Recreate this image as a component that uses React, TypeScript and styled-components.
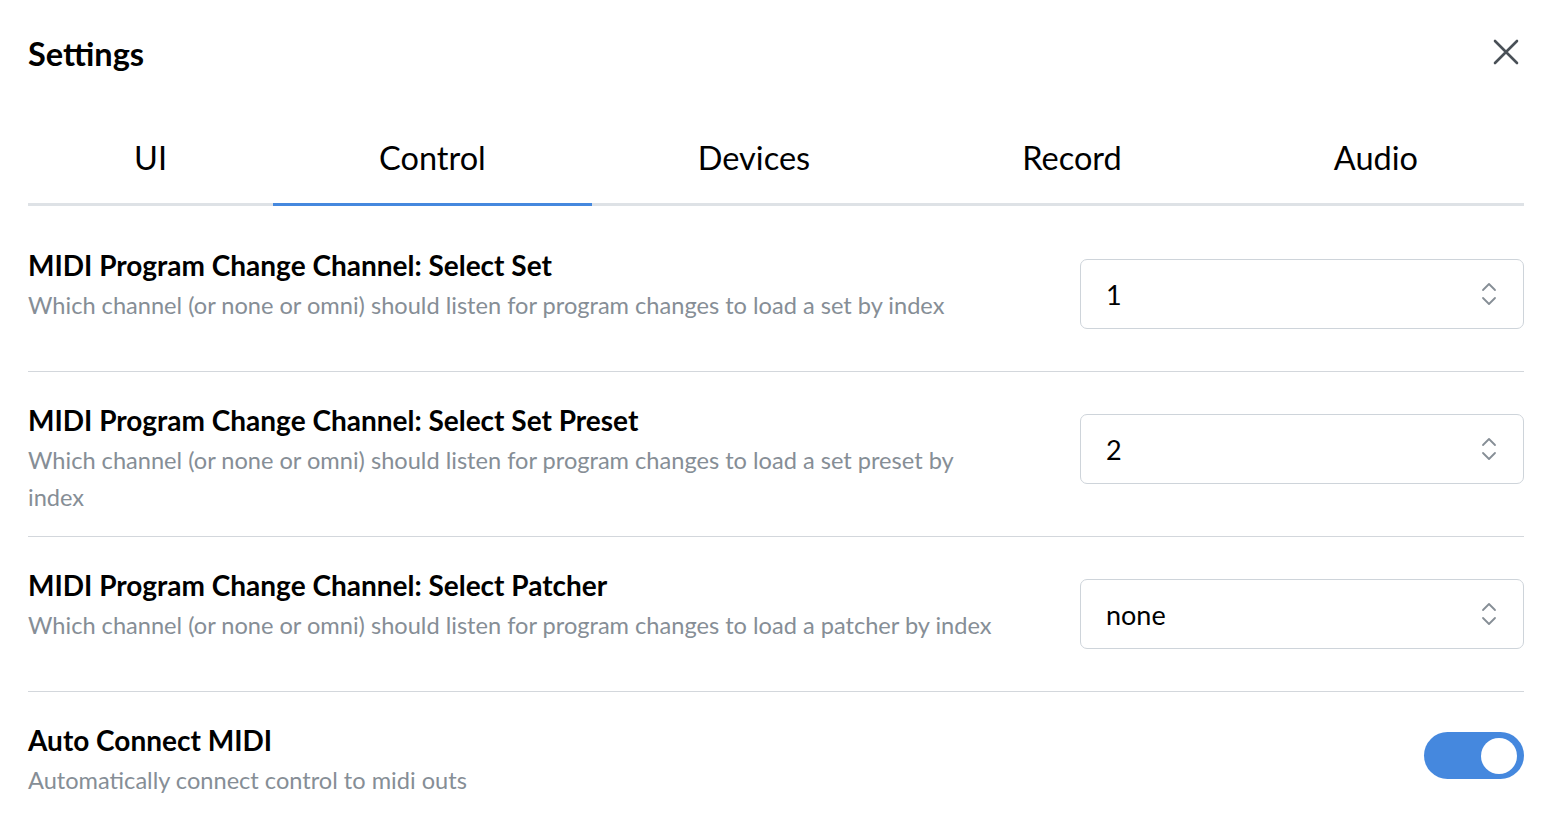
import { useState } from "react";
import styled, { createGlobalStyle } from "styled-components";

const GlobalStyle = createGlobalStyle`
	html, body {
		margin: 0;
		padding: 0;
		background: #ffffff;
	}
	body {
		font-family: Lato, "Noto Sans", sans-serif;
		color: #000000;
	}
`;

const Page = styled.div`
	padding: 0 28px;
	box-sizing: border-box;
	width: 100%;
`;

const Header = styled.div`
	display: flex;
	align-items: center;
	justify-content: space-between;
	height: 108px;
`;

const Title = styled.h1`
	margin: 0;
	font-size: 32.5px;
	font-weight: 700;
	line-height: 1;
`;

const CloseButton = styled.button`
	border: 0;
	background: transparent;
	padding: 0;
	margin-right: 4px;
	margin-top: -4px;
	width: 28px;
	height: 28px;
	display: flex;
	align-items: center;
	justify-content: center;
	color: #495057;
	cursor: pointer;
`;

const TabList = styled.div`
	display: flex;
	border-bottom: 3px solid #dee2e6;
`;

const Tab = styled.button<{ $active?: boolean }>`
	flex: 1 1 auto;
	height: 98px;
	border: 0;
	background: transparent;
	font-family: Lato, "Noto Sans", sans-serif;
	font-size: 32.5px;
	color: #000000;
	padding: 4px 0 0;
	margin-bottom: -3px;
	border-bottom: 3px solid ${(p) => (p.$active ? "#4588de" : "transparent")};
	cursor: pointer;
`;

const Panel = styled.div`
	padding-top: 11px;
`;

const Row = styled.div<{ $last?: boolean }>`
	display: flex;
	align-items: flex-start;
	gap: 76px;
	padding: 30px 0 20px;
	border-bottom: ${(p) => (p.$last ? "0" : "1.5px solid #d3d7dc")};
`;

const TextCol = styled.div`
	flex: 1;
	min-width: 0;
`;

const RowTitle = styled.div`
	font-size: 28px;
	font-weight: 700;
	line-height: 36px;
`;

const RowDesc = styled.div`
	font-size: 23.6px;
	line-height: 37px;
	color: #868e96;
	margin-top: 4px;
`;

const SelectBox = styled.div`
	flex: 0 0 444px;
	height: 70px;
	margin: 12px 0 22px;
	box-sizing: border-box;
	border: 1.5px solid #ced4da;
	border-radius: 7px;
	display: flex;
	align-items: center;
	justify-content: space-between;
	padding: 0 26px 0 25px;
	font-size: 27px;
	color: #000000;
`;

const Switch = styled.div<{ $on: boolean }>`
	flex: 0 0 100px;
	height: 47px;
	margin-top: 10px;
	box-sizing: border-box;
	border-radius: 24px;
	background: ${(p) => (p.$on ? "#4588de" : "#dee2e6")};
	padding: 0 7px;
	display: flex;
	align-items: center;
	justify-content: ${(p) => (p.$on ? "flex-end" : "flex-start")};
	cursor: pointer;
`;

const Thumb = styled.div`
	width: 36px;
	height: 36px;
	border-radius: 50%;
	background: #ffffff;
`;

const Selector = () => (
	<svg width="16" height="26" viewBox="0 0 16 26" fill="none">
		<path d="M2 9 L8 3 L14 9" stroke="#868e96" strokeWidth="1.8" strokeLinecap="round" strokeLinejoin="round" />
		<path d="M2 17 L8 23 L14 17" stroke="#868e96" strokeWidth="1.8" strokeLinecap="round" strokeLinejoin="round" />
	</svg>
);

const CloseIcon = () => (
	<svg width="26" height="26" viewBox="0 0 26 26" fill="none">
		<path d="M2 2 L24 24 M24 2 L2 24" stroke="#495057" strokeWidth="2.6" strokeLinecap="round" />
	</svg>
);

const tabs = ["UI", "Control", "Devices", "Record", "Audio"];

const selects = [
	{
		title: "MIDI Program Change Channel: Select Set",
		desc: "Which channel (or none or omni) should listen for program changes to load a set by index",
		value: "1",
	},
	{
		title: "MIDI Program Change Channel: Select Set Preset",
		desc: "Which channel (or none or omni) should listen for program changes to load a set preset by index",
		value: "2",
	},
	{
		title: "MIDI Program Change Channel: Select Patcher",
		desc: "Which channel (or none or omni) should listen for program changes to load a patcher by index",
		value: "none",
	},
];

export default function App() {
	const [activeTab, setActiveTab] = useState("Control");
	const [autoConnect, setAutoConnect] = useState(true);

	return (
		<Page>
			<GlobalStyle />
			<Header>
				<Title>Settings</Title>
				<CloseButton aria-label="Close">
					<CloseIcon />
				</CloseButton>
			</Header>
			<TabList>
				{tabs.map((t) => (
					<Tab key={t} $active={t === activeTab} onClick={() => setActiveTab(t)}>
						{t}
					</Tab>
				))}
			</TabList>
			<Panel>
				{selects.map((s) => (
					<Row key={s.title}>
						<TextCol>
							<RowTitle>{s.title}</RowTitle>
							<RowDesc>{s.desc}</RowDesc>
						</TextCol>
						<SelectBox>
							<span>{s.value}</span>
							<Selector />
						</SelectBox>
					</Row>
				))}
				<Row $last>
					<TextCol>
						<RowTitle>Auto Connect MIDI</RowTitle>
						<RowDesc>Automatically connect control to midi outs</RowDesc>
					</TextCol>
					<Switch $on={autoConnect} onClick={() => setAutoConnect(!autoConnect)}>
						<Thumb />
					</Switch>
				</Row>
			</Panel>
		</Page>
	);
}
